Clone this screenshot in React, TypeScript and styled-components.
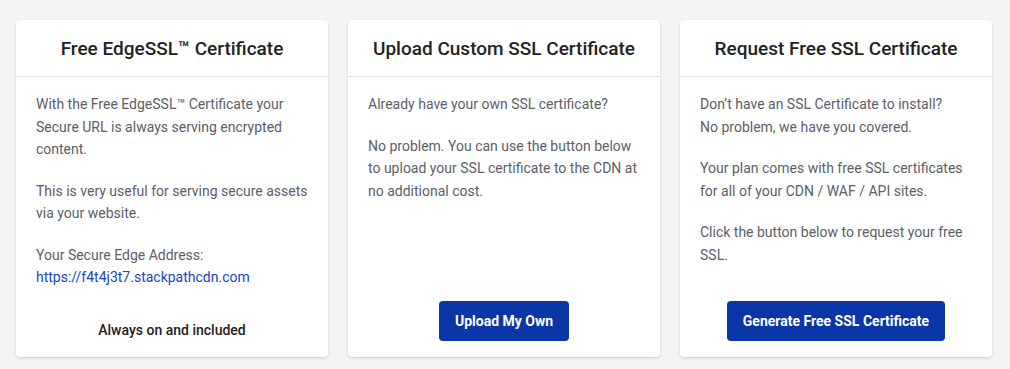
import React from 'react';
import styled, { createGlobalStyle } from 'styled-components';

const GlobalStyle = createGlobalStyle`
  html, body {
    margin: 0;
    padding: 0;
    background: #f3f4f6;
    font-family: Roboto, "Liberation Sans", Arial, sans-serif;
  }
`;

const App: React.FC = () => {
  return (
    <>
      <GlobalStyle />
      <Grid>
        <Card>
          <CardHeader>Free EdgeSSL™ Certificate</CardHeader>
          <CardBody>
            <Paragraph>
              With the Free EdgeSSL™ Certificate your Secure URL is always serving encrypted content.
            </Paragraph>
            <Paragraph>This is very useful for serving secure assets via your website.</Paragraph>
            <Paragraph>
              Your Secure Edge Address:
              <br />
              <Link href="#">https://f4t4j3t7.stackpathcdn.com</Link>
            </Paragraph>
          </CardBody>
          <CardFooter>
            <Note>Always on and included</Note>
          </CardFooter>
        </Card>

        <Card>
          <CardHeader>Upload Custom SSL Certificate</CardHeader>
          <CardBody>
            <Paragraph>Already have your own SSL certificate?</Paragraph>
            <Paragraph>
              No problem. You can use the button below to upload your SSL certificate to the CDN at no
              additional cost.
            </Paragraph>
          </CardBody>
          <CardFooter>
            <Button>Upload My Own</Button>
          </CardFooter>
        </Card>

        <Card>
          <CardHeader>Request Free SSL Certificate</CardHeader>
          <CardBody>
            <Paragraph>
              Don’t have an SSL Certificate to install?
              <br />
              No problem, we have you covered.
            </Paragraph>
            <Paragraph>
              Your plan comes with free SSL certificates for all of your CDN / WAF / API sites.
            </Paragraph>
            <Paragraph>Click the button below to request your free SSL.</Paragraph>
          </CardBody>
          <CardFooter>
            <Button>Generate Free SSL Certificate</Button>
          </CardFooter>
        </Card>
      </Grid>
    </>
  );
};

const Grid = styled.div`
  display: grid;
  grid-template-columns: repeat(3, 312px);
  gap: 20px;
  padding: 20px 16px 12px;
`;

const Card = styled.div`
  display: flex;
  flex-direction: column;
  height: 337px;
  box-sizing: border-box;
  background: #ffffff;
  border-radius: 4px;
  box-shadow: 0 1px 3px rgba(0, 0, 0, 0.12), 0 1px 2px rgba(0, 0, 0, 0.06);
`;

const CardHeader = styled.div`
  height: 56px;
  display: flex;
  align-items: center;
  justify-content: center;
  border-bottom: 1px solid #e2e4e8;
  font-size: 19px;
  font-weight: 500;
  color: #222222;
`;

const CardBody = styled.div`
  flex: 1;
  padding: 16px 20px 0;
`;

const Paragraph = styled.p`
  margin: 0 0 19px;
  font-size: 14px;
  line-height: 22.5px;
  color: #5c6068;
`;

const Link = styled.a`
  color: #1a44c2;
  text-decoration: none;
`;

const CardFooter = styled.div`
  display: flex;
  justify-content: center;
  padding: 0 20px 16px;
`;

const Note = styled.div`
  font-size: 14px;
  font-weight: 500;
  color: #222222;
  padding-bottom: 3px;
`;

const Button = styled.button`
  height: 40px;
  padding: 0 16px;
  border: none;
  border-radius: 4px;
  background: #0b36a8;
  color: #ffffff;
  font-family: inherit;
  font-size: 14px;
  font-weight: 700;
  cursor: pointer;
`;

export default App;
